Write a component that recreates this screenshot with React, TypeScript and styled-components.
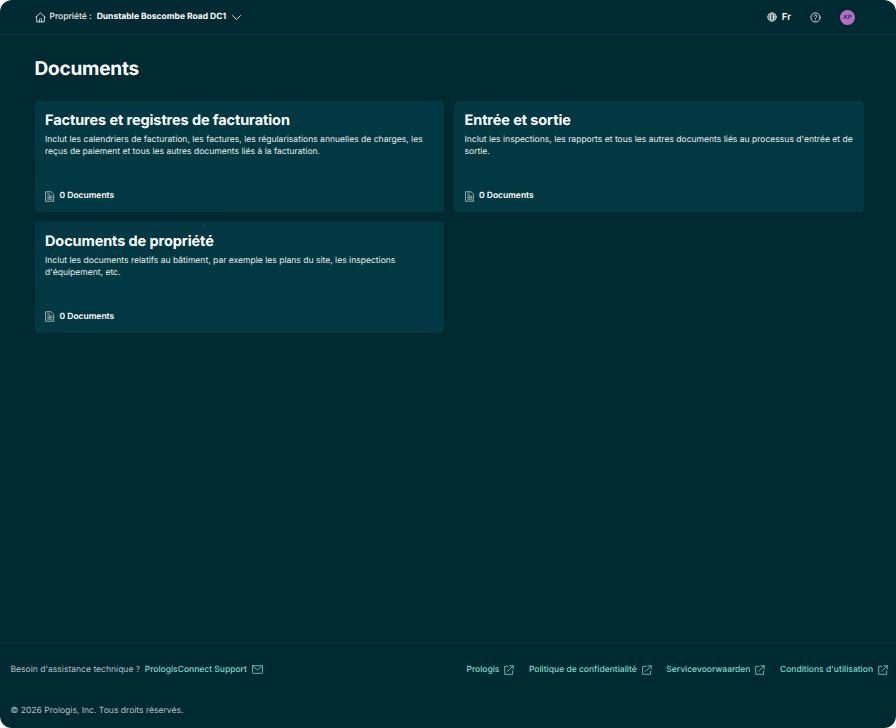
import React from "react";
import styled, { createGlobalStyle } from "styled-components";

const GlobalStyle = createGlobalStyle`
  html, body {
    margin: 0;
    padding: 0;
    background: #ffffff;
  }
  body {
    font-family: Inter, "Liberation Sans", sans-serif;
    text-rendering: geometricPrecision;
  }
`;

const Page = styled.div`
  width: 896px;
  height: 728px;
  display: flex;
  flex-direction: column;
  background: #002a31;
  border-radius: 12px;
  overflow: hidden;
  color: #ffffff;
`;

const TopBar = styled.header`
  height: 34px;
  flex: none;
  display: flex;
  align-items: center;
  justify-content: space-between;
  padding: 0 41px 0 34.5px;
  border-bottom: 1px solid #06363f;
`;

const PropertyPicker = styled.div`
  display: flex;
  align-items: center;
  font-size: 8.5px;
  font-weight: 500;
  color: #e6eeee;
`;

const PropertyName = styled.span`
  font-weight: 700;
  color: #ffffff;
  margin-left: 5px;
  margin-right: 5px;
`;

const TopActions = styled.div`
  display: flex;
  align-items: center;
`;

const Language = styled.span`
  font-size: 9.5px;
  font-weight: 600;
  margin-left: 5px;
  margin-right: 19px;
`;

const Avatar = styled.div`
  width: 15px;
  height: 15px;
  border-radius: 50%;
  margin-left: 19px;
  background: #b36fc4;
  color: #4b2a57;
  font-size: 6px;
  font-weight: 700;
  display: flex;
  align-items: center;
  justify-content: center;
`;

const Main = styled.main`
  flex: 1;
  padding: 0 32px 0 34.5px;
`;

const Title = styled.h1`
  margin: 21.5px 0 20.5px;
  font-size: 19px;
  line-height: 24px;
  font-weight: 700;
  letter-spacing: -0.2px;
`;

const CardGrid = styled.div`
  display: grid;
  grid-template-columns: 409.5px 410px;
  gap: 9.5px 10px;
`;

const Card = styled.section`
  height: 111px;
  box-sizing: border-box;
  padding: 11px 10px 10px 10.5px;
  display: flex;
  flex-direction: column;
  background: #013841;
  border-radius: 3px;
`;

const CardTitle = styled.h2`
  margin: 0 0 4px;
  font-size: 14.5px;
  line-height: 18px;
  font-weight: 700;
  letter-spacing: -0.1px;
`;

const CardText = styled.p`
  margin: 0;
  font-size: 8.55px;
  line-height: 12px;
  color: #e8f0f0;
`;

const CardFooter = styled.div`
  margin-top: auto;
  display: flex;
  align-items: center;
  gap: 5px;
  font-size: 8.5px;
  font-weight: 600;
  line-height: 12px;
`;

const Footer = styled.footer`
  flex: none;
  height: 85px;
  box-sizing: border-box;
  padding: 19.5px 8px 0 10.5px;
  border-top: 1px solid #06363f;
  font-size: 8.55px;
  line-height: 12px;
  color: #b3c3c5;
`;

const FooterRow = styled.div`
  display: flex;
  align-items: center;
  justify-content: space-between;
`;

const Support = styled.div`
  display: flex;
  align-items: center;
`;

const LinkList = styled.nav`
  display: flex;
  align-items: center;
  gap: 14.5px;
`;

const FooterLink = styled.a`
  display: flex;
  align-items: center;
  gap: 5px;
  font-size: 8.5px;
  color: #7bdccb;
  font-weight: 500;
  text-decoration: none;
`;

const SupportLink = styled(FooterLink)`
  margin-left: 4.5px;
`;

const Copyright = styled.div`
  margin-top: 29.5px;
`;

const Icon = styled.svg`
  flex: none;
  fill: none;
  stroke: currentColor;
  stroke-linecap: round;
  stroke-linejoin: round;
`;

const HomeIcon = () => (
  <Icon width="11" height="11" viewBox="0 0 12 12" strokeWidth="0.9" style={{ marginRight: 4 }}>
    <path d="M.8 5.6 6 1l5.2 4.6M1.8 4.8v6h8.4v-6" />
    <path d="M4.8 10.8V8.4a1.2 1.2 0 0 1 2.4 0v2.4" />
  </Icon>
);

const Chevron = () => (
  <Icon width="11" height="11" viewBox="0 0 12 12" strokeWidth="1">
    <path d="M1.5 3.8 6 8.2l4.5-4.4" />
  </Icon>
);

const GlobeIcon = () => (
  <Icon width="10" height="10" viewBox="0 0 12 12" strokeWidth="0.9">
    <circle cx="6" cy="6" r="5" />
    <ellipse cx="6" cy="6" rx="2.2" ry="5" />
    <path d="M1 6h10M1.7 3.5h8.6M1.7 8.5h8.6" />
  </Icon>
);

const HelpIcon = () => (
  <Icon width="11" height="11" viewBox="0 0 12 12" strokeWidth="0.9">
    <circle cx="6" cy="6" r="5" />
    <path d="M4.5 4.7a1.5 1.5 0 1 1 2.2 1.4c-.5.3-.7.6-.7 1.1" />
    <path d="M6 8.8v.1" />
  </Icon>
);

const DocIcon = () => (
  <Icon width="9.5" height="11" viewBox="0 0 9.5 11" strokeWidth="0.8" color="#c4d3d5">
    <path d="M.8.8h5.2l2.7 2.6v6.8H.8z" />
    <path d="M2.6 3h2M2.6 5h4.4M2.6 6.6h4.4M2.6 8.2h4.4" />
  </Icon>
);

const MailIcon = () => (
  <Icon width="11" height="9" viewBox="0 0 11 9" strokeWidth="0.8">
    <rect x="0.5" y="0.7" width="10" height="7.6" rx="0.6" />
    <path d="M.7 1.2 5.5 5l4.8-3.8" />
  </Icon>
);

const ExternalIcon = () => (
  <Icon width="10" height="10" viewBox="0 0 10 10" strokeWidth="0.8">
    <path d="M4 1.4H.7v7.9h7.9V6" />
    <path d="M3.6 6.4 9.2.8M5.8.8h3.4v3.4" />
  </Icon>
);

const cards = [
  {
    title: "Factures et registres de facturation",
    text: "Inclut les calendriers de facturation, les factures, les régularisations annuelles de charges, les reçus de paiement et tous les autres documents liés à la facturation.",
  },
  {
    title: "Entrée et sortie",
    text: "Inclut les inspections, les rapports et tous les autres documents liés au processus d'entrée et de sortie.",
  },
  {
    title: "Documents de propriété",
    text: "Inclut les documents relatifs au bâtiment, par exemple les plans du site, les inspections d'équipement, etc.",
  },
];

const links = ["Prologis", "Politique de confidentialité", "Servicevoorwaarden", "Conditions d'utilisation"];

export default function App() {
  return (
    <>
      <GlobalStyle />
      <Page>
        <TopBar>
          <PropertyPicker>
            <HomeIcon />
            Propriété :
            <PropertyName>Dunstable Boscombe Road DC1</PropertyName>
            <Chevron />
          </PropertyPicker>
          <TopActions>
            <GlobeIcon />
            <Language>Fr</Language>
            <HelpIcon />
            <Avatar>KP</Avatar>
          </TopActions>
        </TopBar>
        <Main>
          <Title>Documents</Title>
          <CardGrid>
            {cards.map((card) => (
              <Card key={card.title}>
                <CardTitle>{card.title}</CardTitle>
                <CardText>{card.text}</CardText>
                <CardFooter>
                  <DocIcon />0 Documents
                </CardFooter>
              </Card>
            ))}
          </CardGrid>
        </Main>
        <Footer>
          <FooterRow>
            <Support>
              Besoin d'assistance technique ?
              <SupportLink href="#">
                PrologisConnect Support
                <MailIcon />
              </SupportLink>
            </Support>
            <LinkList>
              {links.map((label) => (
                <FooterLink href="#" key={label}>
                  {label}
                  <ExternalIcon />
                </FooterLink>
              ))}
            </LinkList>
          </FooterRow>
          <Copyright>© 2026 Prologis, Inc. Tous droits réservés.</Copyright>
        </Footer>
      </Page>
    </>
  );
}
